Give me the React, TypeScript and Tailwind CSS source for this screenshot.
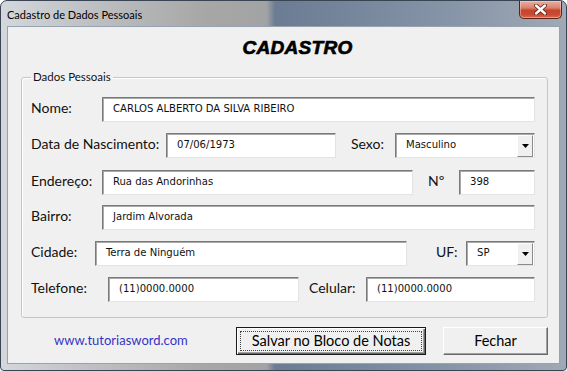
import React from "react";

const labelCls =
  "font-['Lato','Noto_Sans',sans-serif] text-[14px] leading-[18px] text-[#111] pb-[3px] whitespace-nowrap shrink-0";
const valueCls =
  "font-['DejaVu_Sans_Condensed','DejaVu_Sans',sans-serif] text-[11.2px] text-[#111] whitespace-nowrap";
const sunken =
  "h-[25px] bg-white border border-t-[#7a7a7a] border-l-[#7a7a7a] border-r-[#e3e3e3] border-b-[#e3e3e3] shadow-[inset_1px_1px_0_#a9a9a9] flex items-center shrink-0";

function Field({ value, className }: { value: string; className: string }) {
  return (
    <div className={`${sunken} pl-[10px] ${className}`}>
      <span className={valueCls}>{value}</span>
    </div>
  );
}

function Select({ value, className }: { value: string; className: string }) {
  return (
    <div className={`${sunken} pl-[10px] pr-[1px] ${className}`}>
      <span className={`${valueCls} flex-1`}>{value}</span>
      <div className="w-[16px] h-[22px] bg-[#f0f0f0] border border-t-white border-l-white border-r-[#8a8a8a] border-b-[#8a8a8a] flex items-center justify-center">
        <svg width="7" height="4" viewBox="0 0 7 4">
          <path d="M0 0 H7 L3.5 4 Z" fill="#000" />
        </svg>
      </div>
    </div>
  );
}

export default function App() {
  return (
    <div className="w-[567px] h-[371px] flex flex-col rounded-t-[7px] rounded-b-[4px] border border-[#3a4554] overflow-hidden bg-[linear-gradient(90deg,#d4d7db_0%,#bfc1c4_15%,#a7a7a7_36%,#a2a3a4_47%,#6c7c94_48.5%,#74849a_60%,#8795a8_80%,#a0a9b5_100%)]">
      {/* title bar */}
      <div className="h-[26px] flex items-start shrink-0">
        <span className="pl-[6px] pt-[7px] font-['Lato','Noto_Sans',sans-serif] text-[11px] leading-[14px] text-black">
          Cadastro de Dados Pessoais
        </span>
        <div className="ml-auto mr-[4px] w-[43px] h-[18px] rounded-b-[5px] border border-t-0 border-[#5c2218] bg-[linear-gradient(180deg,#eab0a2_0%,#dc8170_40%,#c4442c_55%,#cc4a33_80%,#dc6a50_100%)] shadow-[inset_0_0_0_1px_rgba(255,220,210,0.45)] flex items-center justify-center">
          <svg width="13" height="11" viewBox="0 0 13 11">
            <path
              d="M2 1.5 L11 9.5 M11 1.5 L2 9.5"
              stroke="#5a2015"
              strokeWidth="4"
              strokeLinecap="round"
            />
            <path
              d="M2 1.5 L11 9.5 M11 1.5 L2 9.5"
              stroke="#ffffff"
              strokeWidth="2.4"
              strokeLinecap="round"
            />
          </svg>
        </div>
      </div>

      {/* client area */}
      <div className="mx-[7px] mb-[7px] flex-1 bg-[#f0f0f0] shadow-[0_0_0_1px_#97a2b1] flex flex-col">
        <div className="h-[42px] pt-[9px] pl-[28px] text-center shrink-0">
          <span className="font-['Liberation_Sans','Arial',sans-serif] font-bold italic text-[19px] leading-[20px] text-black [-webkit-text-stroke:0.7px_#000] tracking-[0.3px]">
            CADASTRO
          </span>
        </div>

        <fieldset className="ml-[13px] mr-[11px] border border-[#c3c6ca] rounded-[3px] pl-[9px] pr-[12px] pt-[12px] pb-[15px] shadow-[inset_1px_1px_0_#fff]">
          <legend className="px-[2px] font-['Lato','Noto_Sans',sans-serif] text-[11.5px] leading-[16px] text-[#111]">
            Dados Pessoais
          </legend>

          <div className="flex items-center">
            <span className={`${labelCls} w-[71px]`}>Nome:</span>
            <Field value="CARLOS ALBERTO DA SILVA RIBEIRO" className="flex-1" />
          </div>

          <div className="flex items-center mt-[11px]">
            <span className={`${labelCls} w-[135px]`}>Data de Nascimento:</span>
            <Field value="07/06/1973" className="w-[170px]" />
            <span className={`${labelCls} ml-[15px] w-[44px]`}>Sexo:</span>
            <Select value="Masculino" className="flex-1" />
          </div>

          <div className="flex items-center mt-[12px]">
            <span className={`${labelCls} w-[71px]`}>Endereço:</span>
            <Field value="Rua das Andorinhas" className="w-[311px]" />
            <span className={`${labelCls} ml-[15px] w-[31px]`}>Nº</span>
            <Field value="398" className="flex-1" />
          </div>

          <div className="flex items-center mt-[10px]">
            <span className={`${labelCls} w-[71px]`}>Bairro:</span>
            <Field value="Jardim Alvorada" className="flex-1" />
          </div>

          <div className="flex items-center mt-[11px]">
            <span className={`${labelCls} w-[64px]`}>Cidade:</span>
            <Field value="Terra de Ninguém" className="w-[312px]" />
            <span className={`${labelCls} ml-[29px] w-[30px]`}>UF:</span>
            <Select value="SP" className="flex-1" />
          </div>

          <div className="flex items-center mt-[11px]">
            <span className={`${labelCls} w-[77px]`}>Telefone:</span>
            <Field value="(11)0000.0000" className="w-[191px]" />
            <span className={`${labelCls} ml-[10px] w-[57px]`}>Celular:</span>
            <Field value="(11)0000.0000" className="flex-1" />
          </div>
        </fieldset>

        <div className="mt-[9px] ml-[46px] mr-[11px] h-[28px] flex items-center">
          <span className="font-['Lato','Noto_Sans',sans-serif] text-[13px] text-[#3434c4]">
            www.tutoriasword.com
          </span>
          <div className="ml-auto flex gap-[17px] h-[28px]">
            <div className="w-[190px] h-[28px] border border-[#1a1a1a] bg-[#f0f0f0] shadow-[inset_1px_1px_0_#fff,inset_-1px_-1px_0_#696969,inset_-2px_-2px_0_#a0a0a0] flex p-[3px]">
              <div className="flex-1 border border-dotted border-[#444] flex items-center justify-center">
                <span className="font-['Lato','Noto_Sans',sans-serif] text-[14.5px] text-black">
                  Salvar no Bloco de Notas
                </span>
              </div>
            </div>
            <div className="w-[105px] h-[28px] bg-[#f0f0f0] border border-t-white border-l-white border-r-[#696969] border-b-[#696969] shadow-[inset_-1px_-1px_0_#a0a0a0] flex items-center justify-center">
              <span className="font-['Lato','Noto_Sans',sans-serif] text-[14.5px] text-black">
                Fechar
              </span>
            </div>
          </div>
        </div>
      </div>
    </div>
  );
}
